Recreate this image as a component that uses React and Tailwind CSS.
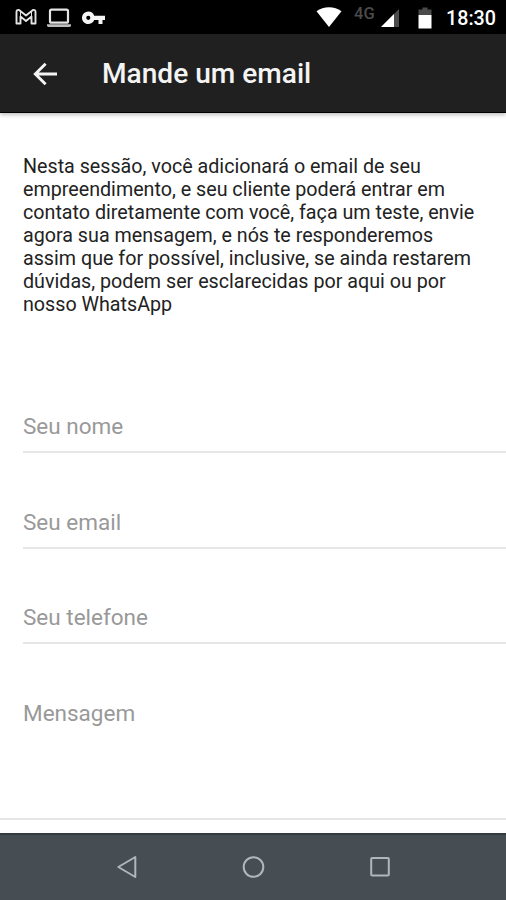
import React from 'react';

const paragraph = [
  'Nesta sessão, você adicionará o email de seu',
  'empreendimento, e seu cliente poderá entrar em',
  'contato diretamente com você, faça um teste, envie',
  'agora sua mensagem, e nós te responderemos',
  'assim que for possível, inclusive, se ainda restarem',
  'dúvidas, podem ser esclarecidas por aqui ou por',
  'nosso WhatsApp',
];

const StatusBar = () => (
  <div className="flex h-[34px] items-center justify-between bg-black pl-[15px] pr-[10px] text-white">
    <div className="flex items-center">
      <svg className="h-[18px] w-[22px]" viewBox="0 0 22 18" fill="none" stroke="#e4e4e4" strokeWidth="1.9" strokeLinejoin="round">
        <path d="M1.500 15.500V4Q1.500 1.500 4 2L11 7.500L18 2Q20.500 1.500 20.500 4V15.500H16.500V8.500L11 13L5.500 8.500V15.500Z" />
        <path d="M5.500 8.500V3.500M16.500 8.500V3.500" strokeWidth="1" />
      </svg>
      <svg className="ml-[9px] mt-[1px] h-[20px] w-[26px]" viewBox="0 0 26 20" fill="none">
        <rect x="4" y="1.700" width="18" height="13" rx="1.500" stroke="#e4e4e4" strokeWidth="2.200" />
        <path d="M1 16.300H25V17.300Q25 19 23.500 19H2.500Q1 19 1 17.300Z" fill="#bdbdbd" />
      </svg>
      <svg className="ml-[10px] mt-[1px] h-[14px] w-[24px]" viewBox="0 0 24 14" fill="#f5f5f5">
        <path fillRule="evenodd" d="M6.300 0.500A6.300 6.300 0 1 0 12.200 9H16.500V13H20.500V9H23V4.700H12.200A6.300 6.300 0 0 0 6.300 0.500ZM6.300 4.700A2.100 2.100 0 1 1 6.300 8.900A2.100 2.100 0 0 1 6.300 4.700Z" />
      </svg>
    </div>
    <div className="flex items-center">
      <svg className="h-[20px] w-[26px]" viewBox="0 0 26 20" fill="#ffffff">
        <path d="M13 20L0.500 4.300Q6 0.300 13 0.300T25.500 4.300Z" />
      </svg>
      <span className="ml-[12px] h-[24px] w-[22px] text-[16.500px] leading-[18px] font-medium text-[#4b4b4b]">4G</span>
      <svg className="ml-[5px] mt-[2px] h-[18px] w-[18px]" viewBox="0 0 18 18">
        <path d="M18 0V18H0Z" fill="#4b4b4b" />
        <path d="M13 5V18H0Z" fill="#ffffff" />
      </svg>
      <svg className="ml-[19px] mt-[1px] h-[22px] w-[14px]" viewBox="0 0 14 22">
        <path d="M0.500 2.500H4.500V0.500H9.500V2.500H13.500V8H0.500Z" fill="#4b4b4b" />
        <path d="M0.500 8H13.500V21.500H0.500Z" fill="#ffffff" />
      </svg>
      <span className="ml-[14px] mt-[4px] text-[19.700px] leading-6 font-medium whitespace-nowrap">18:30</span>
    </div>
  </div>
);

const Header = () => (
  <header className="flex h-[79px] items-center border-b border-black bg-[#202020] pl-[33px] text-white shadow-[0_2px_4px_rgba(0,0,0,0.25)]">
    <button type="button" aria-label="Voltar" className="mt-[2px]">
      <svg className="h-6 w-6" viewBox="0 0 24 24" fill="none" stroke="#f4f4f4" strokeWidth="2.900">
        <path d="M24 12H3M12.600 1.700L2.300 12L12.600 22.300" />
      </svg>
    </button>
    <h1 className="mt-[2px] ml-[45px] text-[28.100px] leading-8 font-medium whitespace-nowrap text-[#f4f4f4]">Mande um email</h1>
  </header>
);

const Field = ({ label, className }) => (
  <label className={`block border-b-2 border-[#e6e6e6] text-[22.500px] leading-[26px] text-[#999999] ${className}`}>
    <span>{label}</span>
  </label>
);

const NavBar = () => (
  <nav className="flex h-[67px] items-center justify-center gap-[103px] border-t-2 border-[#343b3e] bg-[#464e54] pb-[2px]">
    <svg className="h-6 w-6" viewBox="0 0 24 24" fill="none" stroke="#b0b6b9" strokeWidth="2" strokeLinejoin="round">
      <path d="M21.300 2V22L4.300 12Z" />
    </svg>
    <svg className="h-6 w-6" viewBox="0 0 24 24" fill="none" stroke="#b0b6b9" strokeWidth="2">
      <circle cx="12.500" cy="12" r="9.800" />
    </svg>
    <svg className="h-6 w-6" viewBox="0 0 24 24" fill="none" stroke="#b0b6b9" strokeWidth="2">
      <rect x="3.200" y="3" width="17.600" height="17.600" rx="1" />
    </svg>
  </nav>
);

export default function App() {
  return (
    <div className="flex h-[900px] w-[506px] flex-col overflow-hidden bg-white font-['Roboto',sans-serif]">
      <StatusBar />
      <Header />
      <main className="flex-1 pl-[23px]">
        <p className="mt-[42px] text-[19.700px] leading-[23px] whitespace-nowrap text-[#222222]">
          {paragraph.map((line) => (
            <span key={line} className="block">{line}</span>
          ))}
        </p>
        <form className="mt-[97px]">
          <Field label="Seu nome" className="h-[40px]" />
          <Field label="Seu email" className="mt-[56px] h-[40px]" />
          <Field label="Seu telefone" className="mt-[55px] h-[40px]" />
          <Field label="Mensagem" className="mt-[56px] -ml-[23px] h-[120px] pl-[23px]" />
        </form>
      </main>
      <NavBar />
    </div>
  );
}
